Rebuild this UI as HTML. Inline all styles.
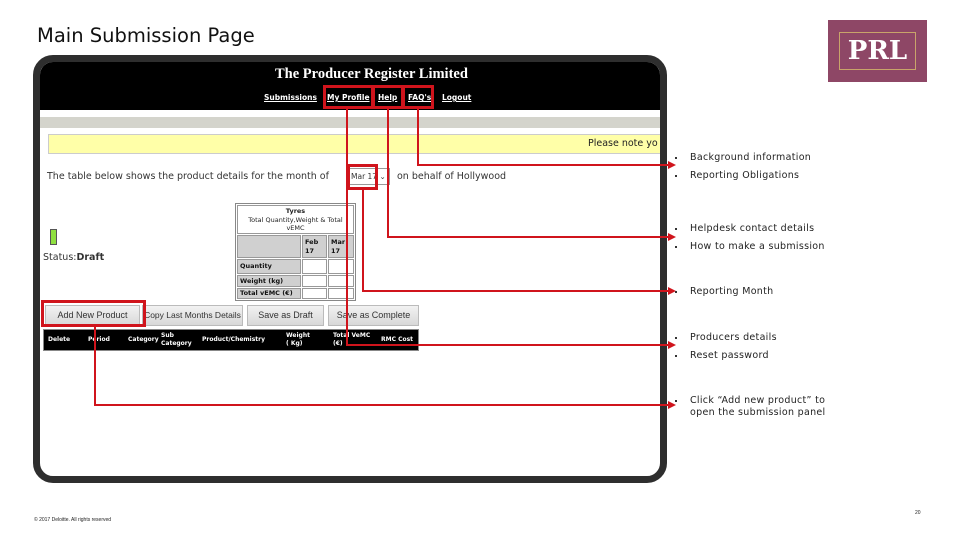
<!DOCTYPE html><html><head><style>
*{margin:0;padding:0;box-sizing:border-box}
body{width:960px;height:540px;background:#fff;position:relative;overflow:hidden;font-family:"Liberation Sans",sans-serif}
.a{position:absolute}
.r{position:absolute;background:#d0141c}
.box{position:absolute;border:3px solid #d0141c}
.bl{position:absolute;left:676px;font-family:"DejaVu Sans",sans-serif;font-size:9.5px;color:#222;letter-spacing:.3px}
.bl:before{content:"";position:absolute;left:-1px;top:5px;width:2px;height:2px;background:#333}
.bl span{margin-left:14px;display:block}
.btn{position:absolute;height:21px;background:linear-gradient(#f2f2f2,#d8d8d8);border:1px solid #bbb;font-size:9px;color:#333;text-align:center;line-height:19px;white-space:nowrap;overflow:hidden}
.ah{position:absolute;width:0;height:0;border-top:4px solid transparent;border-bottom:4px solid transparent;border-left:8px solid #d0141c}
.th{position:absolute;font-family:"DejaVu Sans",sans-serif;font-size:6px;font-weight:bold;color:#fff;line-height:8px}
.c{position:absolute;background:#fff;border:1px solid #999}
.g{position:absolute;background:#d0d0d0;border:1px solid #999;font-family:"DejaVu Sans",sans-serif;font-size:6.5px;font-weight:bold;color:#111;padding-left:2px}
.nv{position:absolute;top:31px;font-family:"DejaVu Sans",sans-serif;font-size:7.5px;font-weight:bold;color:#fff;text-decoration:underline}
</style></head><body>
<div class="a" style="left:37px;top:24px;color:#111;font-family:'DejaVu Sans',sans-serif;font-size:19.5px">Main Submission Page</div>
<div class="a" style="left:828px;top:20px;width:99px;height:62px;background:#8e4766">
 <div class="a" style="left:11px;top:12px;width:77px;height:38px;border:1px solid #c9a46a"></div>
 <div class="a" style="left:0;top:13px;width:99px;text-align:center;color:#fff;font-family:'DejaVu Serif','Liberation Serif',serif;font-weight:bold;font-size:26px;line-height:36px">PRL</div>
</div>
<div class="a" style="left:33px;top:55px;width:634px;height:428px;border:7px solid #2e2e2e;border-radius:20px;background:#fff;overflow:hidden">
 <div class="a" style="left:0;top:0;width:620px;height:48px;background:#000"></div>
 <div class="a" style="left:235px;top:4px;font-family:'Liberation Serif',serif;font-weight:bold;font-size:14.5px;color:#fff">The Producer Register Limited</div>
 <div class="nv" style="left:224px">Submissions</div>
 <div class="nv" style="left:287px">My Profile</div>
 <div class="nv" style="left:338px">Help</div>
 <div class="nv" style="left:368px">FAQ's</div>
 <div class="nv" style="left:402px">Logout</div>
 <div class="a" style="left:0;top:55px;width:620px;height:11px;background:#d4d4cc"></div>
 <div class="a" style="left:8px;top:72px;width:620px;height:20px;background:#ffffa8;border:1px solid #ccc;font-family:'DejaVu Sans',sans-serif;font-size:9.5px;color:#222;line-height:18px"><span style="position:absolute;left:539px">Please note yo</span></div>
 <div class="a" style="left:7px;top:109px;font-family:'DejaVu Sans',sans-serif;font-size:9.5px;color:#333">The table below shows the product details for the month of</div>
 <div class="a" style="left:308px;top:106px;width:42px;height:17px;border:1px solid #999;font-family:'DejaVu Sans',sans-serif;font-size:7.5px;line-height:15px;padding-left:2px;color:#333">Mar 17 &#8964;</div>
 <div class="a" style="left:357px;top:109px;font-family:'DejaVu Sans',sans-serif;font-size:9.5px;color:#333">on behalf of Hollywood</div>
 <div class="a" style="left:10px;top:167px;width:7px;height:16px;background:#8fe040;border:1px solid #555"></div>
 <div class="a" style="left:3px;top:190px;font-family:'DejaVu Sans',sans-serif;font-size:9.5px;color:#333">Status:<b>Draft</b></div>
 <div class="a" style="left:195px;top:141px;width:121px;height:98px;border:1px solid #888"></div>
 <div class="c" style="left:197px;top:143px;width:117px;height:29px;text-align:center;font-family:'DejaVu Sans',sans-serif;font-size:6.5px;line-height:8.5px;color:#222;padding-top:1px"><b>Tyres</b><br>Total Quantity,Weight &amp; Total<br>vEMC</div>
 <div class="g" style="left:197px;top:173px;width:64px;height:23px"></div>
 <div class="g" style="left:262px;top:173px;width:25px;height:23px;line-height:9px;padding-top:2px">Feb<br>17</div>
 <div class="g" style="left:288px;top:173px;width:26px;height:23px;line-height:9px;padding-top:2px">Mar<br>17</div>
 <div class="g" style="left:197px;top:197px;width:64px;height:15px;line-height:13px">Quantity</div>
 <div class="c" style="left:262px;top:197px;width:25px;height:15px"></div><div class="c" style="left:288px;top:197px;width:26px;height:15px"></div>
 <div class="g" style="left:197px;top:213px;width:64px;height:12px;line-height:10px">Weight (kg)</div>
 <div class="c" style="left:262px;top:213px;width:25px;height:12px"></div><div class="c" style="left:288px;top:213px;width:26px;height:12px"></div>
 <div class="g" style="left:197px;top:226px;width:64px;height:11px;line-height:9px">Total vEMC (€)</div>
 <div class="c" style="left:262px;top:226px;width:25px;height:11px"></div><div class="c" style="left:288px;top:226px;width:26px;height:11px"></div>
 <div class="btn" style="left:5px;top:243px;width:95px">Add New Product</div>
 <div class="btn" style="left:102px;top:243px;width:101px;font-size:8.5px">Copy Last Months Details</div>
 <div class="btn" style="left:207px;top:243px;width:77px">Save as Draft</div>
 <div class="btn" style="left:288px;top:243px;width:91px">Save as Complete</div>
 <div class="a" style="left:3px;top:267px;width:376px;height:22px;background:#000;border:1px solid #888"></div>
 <div class="th" style="left:8px;top:274px">Delete</div>
 <div class="th" style="left:48px;top:274px">Period</div>
 <div class="th" style="left:88px;top:274px">Category</div>
 <div class="th" style="left:121px;top:270px">Sub<br>Category</div>
 <div class="th" style="left:162px;top:274px">Product/Chemistry</div>
 <div class="th" style="left:246px;top:270px">Weight<br>( Kg)</div>
 <div class="th" style="left:293px;top:270px">Total VeMC<br>(€)</div>
 <div class="th" style="left:341px;top:274px">RMC Cost</div>
</div>
<div class="box" style="left:323px;top:85px;width:51px;height:24px"></div>
<div class="box" style="left:372px;top:85px;width:32px;height:24px"></div>
<div class="box" style="left:402px;top:85px;width:32px;height:24px"></div>
<div class="box" style="left:347px;top:164px;width:31px;height:26px"></div>
<div class="box" style="left:41px;top:300px;width:105px;height:27px"></div>
<div class="r" style="left:417px;top:109px;width:2px;height:57px"></div>
<div class="r" style="left:417px;top:164px;width:252px;height:2px"></div>
<div class="r" style="left:387px;top:109px;width:2px;height:129px"></div>
<div class="r" style="left:387px;top:236px;width:282px;height:2px"></div>
<div class="r" style="left:346px;top:109px;width:2px;height:237px"></div>
<div class="r" style="left:346px;top:344px;width:323px;height:2px"></div>
<div class="r" style="left:362px;top:190px;width:2px;height:102px"></div>
<div class="r" style="left:362px;top:290px;width:307px;height:2px"></div>
<div class="r" style="left:94px;top:327px;width:2px;height:79px"></div>
<div class="r" style="left:94px;top:404px;width:575px;height:2px"></div>
<div class="ah" style="left:668px;top:161px"></div>
<div class="ah" style="left:668px;top:233px"></div>
<div class="ah" style="left:668px;top:287px"></div>
<div class="ah" style="left:668px;top:341px"></div>
<div class="ah" style="left:668px;top:401px"></div>
<div class="bl" style="top:152px"><span>Background information</span></div>
<div class="bl" style="top:170px"><span>Reporting Obligations</span></div>
<div class="bl" style="top:223px"><span>Helpdesk contact details</span></div>
<div class="bl" style="top:241px"><span>How to make a submission</span></div>
<div class="bl" style="top:286px"><span>Reporting Month</span></div>
<div class="bl" style="top:332px"><span>Producers details</span></div>
<div class="bl" style="top:350px"><span>Reset password</span></div>
<div class="bl" style="top:395px;line-height:12px"><span>Click “Add new product” to<br>open the submission panel</span></div>
<div class="a" style="left:34px;top:517px;font-size:5px;color:#222">© 2017 Deloitte. All rights reserved</div>
<div class="a" style="left:915px;top:510px;font-size:5px;color:#222">20</div>
</body></html>
